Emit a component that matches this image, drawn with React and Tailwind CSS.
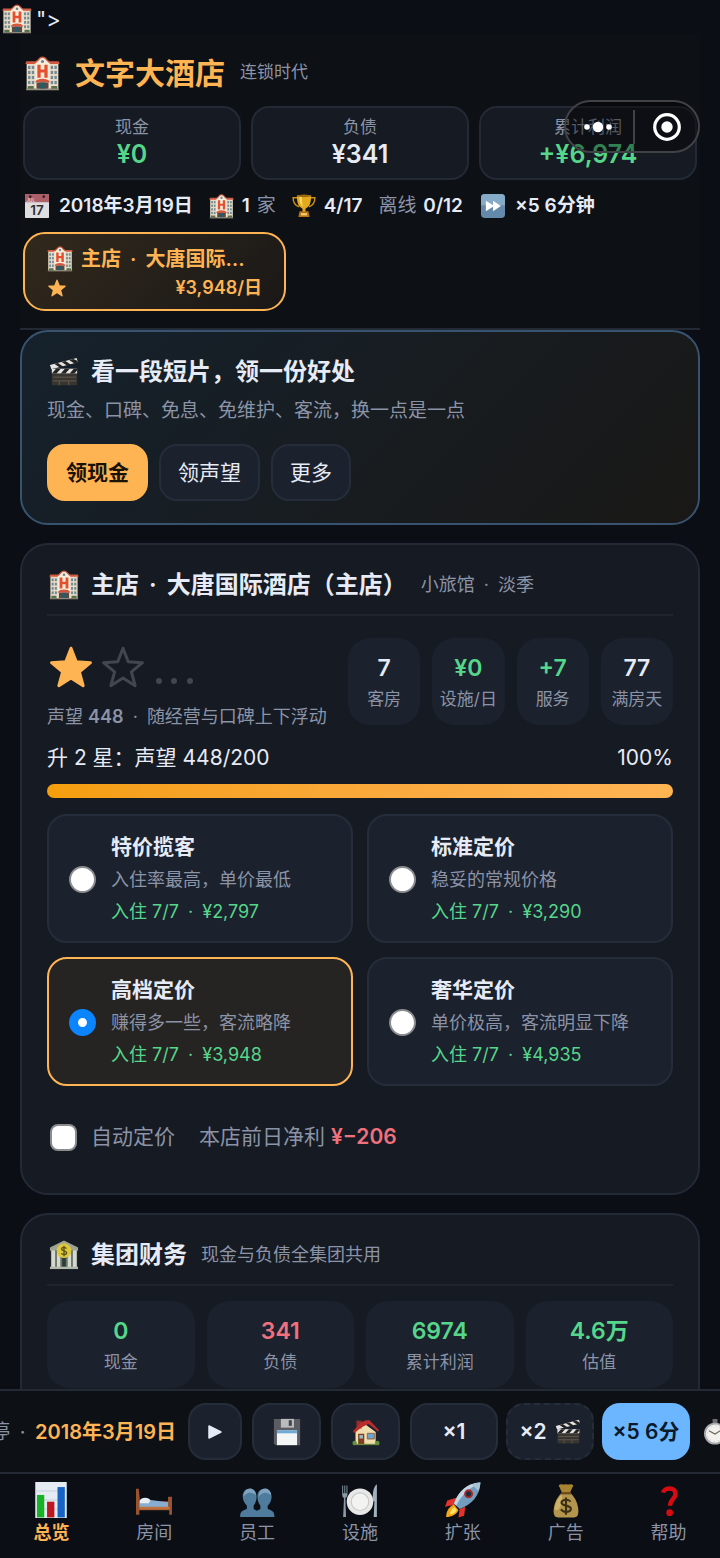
function Svg({ className, children }) {
  return (
    <svg viewBox="0 0 32 32" className={`shrink-0 ${className}`} aria-hidden="true">
      {children}
    </svg>
  );
}

const WINDOWS = [2.8, 6.2, 23.5, 26.9].flatMap((x) => [9, 13.6, 18.2, 22.8].map((y) => [x, y]));

function Hotel({ className }) {
  return (
    <Svg className={className}>
      <rect x="1.5" y="6" width="29" height="24" fill="#e9dcc6" />
      <path d="M1.200 4.800h9v2.400H.3zM21.800 4.800h9l.9 2.400h-9.900z" fill="#cf5a42" />
      <path d="M9.500 30V6C10.500 4.500 12 4.300 12.600 3a4.200 4.200 0 0 1 6.800 0C20 4.300 21.500 4.500 22.500 6v24z" fill="#f5ecdc" />
      <path d="M9.600 6.200C10.600 4.300 12.200 4.200 12.800 2.700a4 4 0 0 1 6.400 0c.6 1.500 2.200 1.600 3.200 3.500" fill="none" stroke="#cf5a42" strokeWidth="1.300" />
      <circle cx="16" cy="5" r="1.400" fill="#6f8288" />
      {WINDOWS.map(([x, y]) => (
        <rect key={`${x}-${y}`} x={x} y={y} width="2.200" height="2.900" fill="#718b96" />
      ))}
      <path d="M11.300 8h3v4.400h3.400V8h3v11.800h-3v-4.700h-3.400v4.700h-3z" fill="#e4502f" />
      <path d="M9.500 23.500c1.500-3.500 11.500-3.500 13 0v.8h-13z" fill="#d4573e" />
      <rect x="10.500" y="24.300" width="11" height="5.700" fill="#5d4a3c" />
      <rect x="13.300" y="24.300" width="5.400" height="5.700" fill="#2d5866" />
      <path d="M1 30h30v1.200H1z" fill="#9a8f80" />
      <path d="M2.500 27.500H8V30H2.500zM24 27.500h5.500V30H24z" fill="#56714c" />
    </Svg>
  );
}

function CalendarIcon({ className }) {
  return (
    <Svg className={className}>
      <rect x="0" y="0" width="32" height="32" rx="1" fill="#dedee0" />
      <path d="M0 0h32v11H0z" fill="#ad6069" />
      <circle cx="7" cy="3.500" r="1.800" fill="#33222a" />
      <circle cx="25" cy="3.500" r="1.800" fill="#33222a" />
      <text x="2" y="10" fontSize="6" fontFamily="Inter, sans-serif" fill="#e9ccd0">JUL</text>
      <text x="16" y="28" textAnchor="middle" fontSize="18" fontFamily="Inter, sans-serif" fill="#303034">17</text>
    </Svg>
  );
}

function Trophy({ className }) {
  return (
    <Svg className={className}>
      <path d="M7 5H1.500c0 7 3 10.500 8 12M25 5h5.500c0 7-3 10.500-8 12" fill="none" stroke="#c98d14" strokeWidth="2" />
      <path d="M6.500 2h19c0 10-2 15-7.500 17.500V24h-4v-4.500C8.500 17 6.500 12 6.500 2z" fill="#e3a91f" />
      <path d="M10 4h3c0 6 .5 10 2 13-3.500-2-5-6-5-13z" fill="#f8db6b" />
      <ellipse cx="16" cy="2.500" rx="9.500" ry="1.700" fill="#9b6a10" />
      <path d="M10 23h12l1.500 7.500h-15z" fill="#b97415" />
      <path d="M12 25.500h8v3h-8z" fill="#f2cf70" />
    </Svg>
  );
}

function FastForward({ className }) {
  return (
    <Svg className={className}>
      <rect x="0" y="0" width="32" height="32" rx="5" fill="#6489aa" />
      <path d="M0 5a5 5 0 0 1 5-5h22a5 5 0 0 1 5 5v10H0z" fill="#86abc8" />
      <path d="M6.500 9 16 15V9l10.500 7L16 23v-6l-9.500 6z" fill="#fff" />
    </Svg>
  );
}

function Clapper({ className }) {
  return (
    <Svg className={className}>
      <path d="M1 8.500 29.500 1l1.300 4.500L2.500 13z" fill="#e4e4e4" />
      <path d="m5.500 7.300 6 4 4-1-6-4zM13.500 5.200l6 4 4-1-6-4zM21.500 3.100l6 4 3.300-1-.6-2-4.300-2z" fill="#262423" />
      <rect x="3" y="12.500" width="27" height="17.500" rx="1" fill="#383430" />
      <path d="M3 12.500h27v5H3z" fill="#e4e4e4" />
      <path d="m7.500 12.500-4.500 5h5l4.500-5zM17 12.500l-4.500 5h5l4.500-5zM26.500 12.500l-4.500 5h5l3-3.200v-1.800z" fill="#262423" />
      <path d="M4 21.500h25M4 25.500h25" stroke="#6f655c" strokeWidth=".8" />
      <path d="M11 26v4M21 26v4" stroke="#6f655c" strokeWidth=".8" />
    </Svg>
  );
}

function Bank({ className }) {
  return (
    <Svg className={className}>
      <path d="M16 .5 31 8v3.500H1V8z" fill="#9ea594" />
      <path d="M2 11h28v18H2z" fill="#6d7766" />
      <path d="M2.500 11h4v18h-4zM8.500 14h3.500v15H8.500zM20 14h3.500v15H20zM25.500 11h4v18h-4z" fill="#d5d8cf" />
      <path d="M14 19h4v10h-4z" fill="#2c3e3b" />
      <path d="M1 28.500h30V31H1z" fill="#b3b8ac" />
      <circle cx="16" cy="11.500" r="7.800" fill="#ddc93b" />
      <path d="M18.600 9.200c-1-2-5.200-1.800-5.200.5 0 2.400 5.400 1.300 5.400 4 0 2.400-4.500 2.500-5.600.4M16 6v11.200" fill="none" stroke="#5f5519" strokeWidth="1.500" />
    </Svg>
  );
}

function Floppy({ className }) {
  return (
    <Svg className={className}>
      <path d="M1 1h30v30H3l-2-2z" fill="#5b5d63" />
      <path d="M9 1h15v10H9z" fill="#b9bbbf" />
      <path d="M18 2.500h3.500V9H18z" fill="#45474c" />
      <path d="M4.500 14h23v17h-23z" fill="#f4f5f6" />
      <path d="M4.500 14h23v3.500h-23z" fill="#6fa9d4" />
    </Svg>
  );
}

function House({ className }) {
  return (
    <Svg className={className}>
      <path d="M4 15 15 7l12 9v14H4z" fill="#f1dcae" />
      <path d="M5 3h6v9H5z" fill="#8e2f2b" />
      <path d="M1 15 10 5l6-2.500h4L31 14l-1.500 1.500L19.500 7l-2 .5L10 11l-7 6z" fill="#bb2b2c" />
      <path d="M7 18h7v12H7z" fill="#7d3f22" />
      <path d="M8.500 19.500h4v4h-4z" fill="#9fb8c4" />
      <path d="M17.500 17.500h8V24h-8z" fill="#6da3cc" stroke="#8a5a36" />
      <circle cx="3" cy="28.500" r="2.500" fill="#5d9636" />
      <circle cx="29" cy="28.500" r="2.500" fill="#5d9636" />
      <path d="M1 29.500h30V31H1z" fill="#6a8a3c" />
    </Svg>
  );
}

function Stopwatch({ className }) {
  return (
    <Svg className={className}>
      <path d="M13 0h6v5h-6z" fill="#6d6f73" />
      <path d="m25 4 3 3-2 2-3-3z" fill="#8b8d91" />
      <circle cx="16" cy="18" r="13.500" fill="#a9abae" />
      <circle cx="16" cy="18" r="11.200" fill="#f2f1ee" />
      <path d="m8.500 14.500 7.500 4 8-5" fill="none" stroke="#67615b" strokeWidth="1.300" />
      <circle cx="16" cy="18" r="9.500" fill="none" stroke="#aaa" strokeWidth="1" strokeDasharray="1 4" />
    </Svg>
  );
}

function Chart({ className }) {
  return (
    <Svg className={className}>
      <path d="M2 0h28v32H2z" fill="#e4ebf2" />
      <path d="M2 8h28M2 16h28M2 24h28" stroke="#c5d0dc" />
      <path d="M3.500 11.500h6.500v20H3.500z" fill="#18b324" />
      <path d="M12.500 17.500h6.500v14h-6.500z" fill="#bd1721" />
      <path d="M21.800 4.500h6.500v27h-6.500z" fill="#1763c4" />
    </Svg>
  );
}

function Bed({ className }) {
  return (
    <Svg className={className}>
      <path d="M0 6h2.500l1 11h25v-4H32v16h-2.500v-4H3v4H0z" fill="#97522f" />
      <path d="M3 17c1-3 8-3.500 10-1l15.500 2v4.500H3z" fill="#87aed0" />
      <path d="M3.500 16.500c1-3.200 8-3.500 9 0l-1 2.300h-8z" fill="#e7edf3" />
      <path d="M3 22h27v2.500H3z" fill="#c0713f" />
    </Svg>
  );
}

function People({ className }) {
  return (
    <Svg className={className}>
      <path d="M1 31c0-5 2-5.500 6-7v-3C1.500 16 2 6 9.500 6S17 16 13 21v3l3 1.500 3-1.500v-3c-4-5-4-15 3.500-15S31 16 25.500 21v3c4 1.500 6 2 6 7z" fill="#4f7b9d" />
      <path d="M4 13c0-9.500 11-9.500 11-1-3-3.500-8-3.500-11 1zM17.500 13c0-9.500 11-9.500 11-1-3-3.500-8-3.500-11 1z" fill="#7fa3be" />
    </Svg>
  );
}

function Plate({ className }) {
  return (
    <Svg className={className}>
      <circle cx="16" cy="17.500" r="11.800" fill="#e8e8e8" />
      <circle cx="16" cy="17.500" r="7.800" fill="#f3f3f2" stroke="#c9cacb" strokeWidth="1" />
      <path d="M.2 3v8c0 2 .8 3 1.600 3L1 31h2.600L3 14c1-.4 1.800-1.500 1.800-3V3H4v7H2.900V3h-.8v7H1V3z" fill="#8b9aa8" />
      <path d="M31 2c-3 2-4 8-3.500 15h1.300L28.200 31H31z" fill="#a3b1be" />
    </Svg>
  );
}

function Rocket({ className }) {
  return (
    <Svg className={className}>
      <path d="M10 14 2 16.500 0 22l9-2zM18 22l-1 8-5 1.500L13 24z" fill="#e3312b" />
      <path d="M8 20c-5 2-7 7-7 11 5 0 9-2 11-6z" fill="#f5a41b" />
      <path d="M8.500 22.500c-3 1.500-4 4-4 6 3 0 5-1.500 6-3.500z" fill="#ffe45c" />
      <path d="M31.500.5C20 1 12 8 8 19l5 5C24 20 31 12 31.500.5z" fill="#739dbe" />
      <path d="M31.500.5C20 1 12 8 8 19l2 2C15 11 22 5 31.500.5z" fill="#c5d6e3" />
      <path d="M31.500.5c-3 .2-5.500.8-7.500 1.800l5.700 5.700c1-2.300 1.600-4.700 1.800-7.500z" fill="#a9c3d6" />
      <circle cx="21" cy="10.500" r="4" fill="#ad292d" />
      <circle cx="21" cy="10.500" r="2.300" fill="#202a38" />
    </Svg>
  );
}

function MoneyBag({ className }) {
  return (
    <Svg className={className}>
      <path d="M9.500 3c2.500-2 3.500 0 6.500-1 3 1 4-1 6.500 1l-3 6.500h-7z" fill="#a98532" />
      <path d="M12 10h8c4 3.500 7 9.500 7 16 0 4-1.500 5.500-4 5.500H9c-2.500 0-4-1.500-4-5.500C5 19.500 8 13.500 12 10z" fill="#b3954e" />
      <path d="M12 11c-3.500 3.500-6 8.500-6 13.500 4 3 8.500-8 6-13.500z" fill="#cdb26a" />
      <path d="M11.500 9h9v2h-9z" fill="#6e491b" />
      <path d="M20 17.500c-1.500-2.700-8-2.200-8 1s8.300 1.800 8.300 5.300c0 3.400-7.100 3.700-8.700.5M16 13.800v15.400" fill="none" stroke="#3e3015" strokeWidth="1.900" />
    </Svg>
  );
}

function Question({ className }) {
  return (
    <Svg className={className}>
      <path d="M10.800 9.500C11.500 5 21.800 4 21.800 10.500c0 4.500-5 5-5 10.500" fill="none" stroke="#d90b12" strokeWidth="4" />
      <circle cx="16.600" cy="27.300" r="3" fill="#d90b12" />
    </Svg>
  );
}

const STAR =
  "M16 3.500 19.500 12.500 29 13.100 21.600 19.200 24.100 28.500 16 23.300 7.900 28.500 10.400 19.200 3 13.100 12.500 12.500z";

function Star({ className, filled = true }) {
  return (
    <Svg className={className}>
      <path
        d={STAR}
        fill={filled ? "currentColor" : "none"}
        stroke="currentColor"
        strokeWidth={2}
        strokeLinejoin="round"
      />
    </Svg>
  );
}

function Dot() {
  return <span className="mx-1">·</span>;
}

function HeaderStat({ label, value, tone }) {
  return (
    <div className="flex flex-col items-center rounded-[18px] border-2 border-[#232a36] bg-[#161a22] pt-[7px] pb-[9px]">
      <span className="text-[17px] leading-6 text-[#8b93a7]">{label}</span>
      <span className={`text-[25px] leading-[30px] font-semibold ${tone}`}>{value}</span>
    </div>
  );
}

function Tile({ label, value, tone }) {
  return (
    <div className="flex flex-col items-center rounded-[22px] bg-[#1b212d] pt-4 pb-3">
      <span className={`text-[23px] leading-7 font-semibold ${tone}`}>{value}</span>
      <span className="mt-1 text-[17px] leading-[27px] whitespace-nowrap text-[#8b93a7]">{label}</span>
    </div>
  );
}

function CardTitle({ icon: Icon, title, note, id }) {
  return (
    <div className="flex items-center border-b-2 border-[#1f242e] pb-[13px]">
      <Icon className="ml-0.5 size-[30px]" />
      <h2 id={id} className="ml-3 text-2xl leading-8 font-semibold whitespace-nowrap">
        {title}
      </h2>
      <span className="ml-3.5 text-[18px] leading-8 whitespace-nowrap text-[#8b93a7]">{note}</span>
    </div>
  );
}

const CARD = "rounded-[28px] border-2 border-[#232a36] bg-[#161a22] px-[25px]";

const prices = [
  ["特价揽客", "入住率最高，单价最低", "¥2,797"],
  ["标准定价", "稳妥的常规价格", "¥3,290"],
  ["高档定价", "赚得多一些，客流略降", "¥3,948"],
  ["奢华定价", "单价极高，客流明显下降", "¥4,935"],
];

const tabs = [
  ["总览", Chart],
  ["房间", Bed],
  ["员工", People],
  ["设施", Plate],
  ["扩张", Rocket],
  ["广告", MoneyBag],
  ["帮助", Question],
];

const CONTROL =
  "flex h-[57px] shrink-0 items-center justify-center rounded-[18px] border-2 border-[#262d3a] bg-[#1b212d] text-[21px] font-semibold whitespace-nowrap";

function PromoCard() {
  return (
    <section
      aria-labelledby="promo"
      className="rounded-[28px] border-2 border-[#38536f] bg-linear-135 from-[#15212c] to-[#191816] px-[25px] pt-6 pb-[22px]"
    >
      <div className="flex items-center">
        <Clapper className="ml-0.5 size-[30px]" />
        <h2 id="promo" className="ml-3 text-2xl leading-8 font-semibold">
          看一段短片，领一份好处
        </h2>
      </div>
      <p className="mt-2 text-[19px] leading-[30px] text-[#8b93a7]">
        现金、口碑、免息、免维护、客流，换一点是一点
      </p>
      <div className="mt-[18px] flex gap-[11px] text-[21px]">
        <button className="h-[57px] rounded-[18px] border-2 border-[#ffb454] bg-[#ffb454] px-[17px] font-semibold text-[#1a1206]">
          领现金
        </button>
        <button className="h-[57px] rounded-[18px] border-2 border-[#262d3a] bg-[#1b212d] px-[17px]">领声望</button>
        <button className="h-[57px] rounded-[18px] border-2 border-[#262d3a] bg-[#1b212d] px-[17px]">更多</button>
      </div>
    </section>
  );
}

function StoreCard() {
  return (
    <section aria-labelledby="store" className={`${CARD} pt-6 pb-10`}>
      <CardTitle
        id="store"
        icon={Hotel}
        title={
          <>
            主店 <Dot /> 大唐国际酒店（主店）
          </>
        }
        note={
          <>
            小旅馆 <Dot /> 淡季
          </>
        }
      />
      <div className="mt-[22px] flex items-start justify-between">
        <div className="min-w-0">
          <div className="flex h-[58px] items-center">
            <Star className="size-12 text-[#ffb454]" />
            <Star filled={false} className="ml-1 size-12 text-[#414651]" />
            <svg viewBox="0 0 40 48" className="ml-2 h-12 w-10 text-[#414651]" aria-hidden="true">
              <g fill="currentColor">
                <circle cx="4" cy="38" r="3" />
                <circle cx="19" cy="38" r="3" />
                <circle cx="35" cy="38" r="3" />
              </g>
            </svg>
          </div>
          <p className="mt-[7px] text-[18px] leading-7 whitespace-nowrap text-[#8b93a7]">
            声望 <b className="font-semibold">448</b> <Dot /> 随经营与口碑上下浮动
          </p>
        </div>
        <div className="grid w-[325px] shrink-0 grid-cols-4 gap-3">
          <Tile value="7" label="客房" tone="text-[#e6ebf5]" />
          <Tile value="¥0" label="设施/日" tone="text-[#56d68a]" />
          <Tile value="+7" label="服务" tone="text-[#56d68a]" />
          <Tile value="77" label="满房天" tone="text-[#e6ebf5]" />
        </div>
      </div>
      <div className="mt-[11px] flex justify-between text-[21px] leading-8">
        <span>升 2 星：声望 448/200</span>
        <span>100%</span>
      </div>
      <div className="mt-2.5 h-3.5 rounded-full bg-linear-to-r from-[#f59e0b] to-[#ffb454]" />
      <div role="radiogroup" aria-label="定价" className="mt-4 grid grid-cols-2 gap-3.5">
        {prices.map(([name, desc, amount]) => (
          <label
            key={name}
            className="flex items-center rounded-[20px] border-2 border-[#262d3a] bg-[#1b212d] pt-[15px] pb-3.5 pl-5 has-checked:border-[#ffb454] has-checked:bg-[#252423]"
          >
            <input
              type="radio"
              name="price"
              defaultChecked={name === "高档定价"}
              className="size-[27px] shrink-0 appearance-none rounded-full border-2 border-[#8b8c90] bg-white checked:border-[9px] checked:border-[#0a84ff]"
            />
            <span className="ml-[15px] flex flex-col whitespace-nowrap">
              <span className="text-[21px] leading-8 font-semibold">{name}</span>
              <span className="text-[18px] leading-[33px] text-[#8b93a7]">{desc}</span>
              <span className="text-[18px] leading-[31px] text-[#56d68a]">
                入住 7/7 <Dot /> {amount}
              </span>
            </span>
          </label>
        ))}
      </div>
      <div className="mt-[35px] flex items-center text-[21px] leading-8 text-[#8b93a7]">
        <label className="flex items-center">
          <input
            type="checkbox"
            className="ml-[3px] size-[27px] appearance-none rounded-lg border-2 border-[#8b8c90] bg-white checked:bg-[#0a84ff]"
          />
          <span className="ml-3.5">自动定价</span>
        </label>
        <span className="ml-6">
          本店前日净利 <b className="font-semibold text-[#f0707e]">¥−206</b>
        </span>
      </div>
    </section>
  );
}

export default function App() {
  return (
    <div className="flex h-screen flex-col overflow-hidden bg-[#0b0e15] font-[Inter,'Noto_Sans_CJK_SC',sans-serif] text-[#e6ebf5]">
      <main className="min-h-0 flex-1 overflow-y-auto [scrollbar-width:none]">
        <div className="flex items-center gap-1 pt-1 pl-0.5 text-[22px] leading-[30px]">
          <Hotel className="size-[30px]" />
          {'">'}
        </div>
        <div className="px-5">
          <header className="relative border-b-2 border-[#232a36] bg-[#0d1015] px-[3px] pt-[18px] pb-[17px]">
            <div className="flex items-center">
              <Hotel className="ml-0.5 size-[35px]" />
              <h1 className="ml-[15px] text-[30px] leading-[42px] font-semibold text-[#ffb454]">文字大酒店</h1>
              <span className="ml-[15px] text-[17px] text-[#8b93a7]">连锁时代</span>
            </div>
            <div className="mt-3 grid grid-cols-3 gap-2.5">
              <HeaderStat label="现金" value="¥0" tone="text-[#56d68a]" />
              <HeaderStat label="负债" value="¥341" tone="text-[#e6ebf5]" />
              <HeaderStat label="累计利润" value="+¥6,974" tone="text-[#56d68a]" />
            </div>
            <div className="absolute top-[66px] right-0 flex h-[53px] w-[136px] items-center rounded-full border-2 border-[#414246] bg-black/40">
              <button aria-label="菜单" className="flex flex-1 justify-center pr-1">
                <svg viewBox="0 0 30 12" className="h-3 w-[30px] fill-white" aria-hidden="true">
                  <circle cx="4" cy="6" r="2.800" />
                  <circle cx="15" cy="6" r="5.200" />
                  <circle cx="26" cy="6" r="2.800" />
                </svg>
              </button>
              <span className="h-[34px] w-0.5 bg-[#414246]" />
              <button aria-label="关闭" className="flex flex-1 justify-center">
                <svg viewBox="0 0 28 28" className="size-7" aria-hidden="true">
                  <circle cx="14" cy="14" r="12.300" fill="none" stroke="#fff" strokeWidth="3.200" />
                  <circle cx="14" cy="14" r="5.700" fill="#fff" />
                </svg>
              </button>
            </div>
            <div className="mt-2.5 flex items-center pl-0.5 text-[19px] leading-8 font-semibold whitespace-nowrap">
              <CalendarIcon className="size-6" />
              <span className="ml-2.5">2018年3月19日</span>
              <Hotel className="ml-4 size-[25px]" />
              <span className="ml-2">
                1 <span className="ml-0.5 font-normal text-[#8b93a7]">家</span>
              </span>
              <Trophy className="ml-4 size-6" />
              <span className="ml-2">4/17</span>
              <span className="ml-4">
                <span className="mr-0.5 font-normal text-[#8b93a7]">离线</span> 0/12
              </span>
              <FastForward className="ml-[18px] size-6" />
              <span className="ml-2.5">×5 6分钟</span>
            </div>
            <button className="mt-2.5 flex w-[263px] flex-col rounded-[22px] border-2 border-[#ffb454] bg-linear-135 from-[#32291c] to-[#1a1817] px-[22px] pt-2.5 pb-2 font-semibold text-[#ffb454]">
              <span className="flex items-center text-xl leading-[30px] whitespace-nowrap">
                <Hotel className="size-[26px]" />
                <span className="ml-2">
                  主店 <Dot /> 大唐国际…
                </span>
              </span>
              <span className="flex w-full items-center justify-between text-[18px] leading-[27px]">
                <Star className="size-5" />
                ¥3,948/日
              </span>
            </button>
          </header>
          <div className="flex flex-col gap-[18px]">
            <PromoCard />
            <StoreCard />
            <section aria-labelledby="finance" className={`${CARD} pt-6 pb-8`}>
              <CardTitle id="finance" icon={Bank} title="集团财务" note="现金与负债全集团共用" />
              <div className="mt-[15px] grid grid-cols-4 gap-3">
                <Tile value="0" label="现金" tone="text-[#56d68a]" />
                <Tile value="341" label="负债" tone="text-[#f0707e]" />
                <Tile value="6974" label="累计利润" tone="text-[#56d68a]" />
                <Tile value="4.6万" label="估值" tone="text-[#56d68a]" />
              </div>
            </section>
          </div>
        </div>
      </main>
      <div className="flex justify-end overflow-hidden border-t-2 border-[#232a36] bg-[#0d1015] py-3">
        <div className="-mr-5 flex shrink-0 items-center gap-2.5">
          <span className="mr-0.5 text-xl whitespace-nowrap text-[#8b93a7]">
            已暂停 <Dot /> <b className="font-semibold text-[#ffb454]">2018年3月19日</b>
          </span>
          <button aria-label="继续" className={`${CONTROL} w-[54px]`}>
            <svg viewBox="0 0 16 16" className="size-4 fill-current stroke-current" aria-hidden="true">
              <path d="M2 2v12l12-6z" strokeWidth="1.500" strokeLinejoin="round" />
            </svg>
          </button>
          <button aria-label="保存" className={`${CONTROL} w-[69px]`}>
            <Floppy className="size-7" />
          </button>
          <button aria-label="主页" className={`${CONTROL} w-[69px]`}>
            <House className="size-7" />
          </button>
          <div className="flex items-center gap-2">
            <button className={`${CONTROL} w-[88px]`}>×1</button>
            <button className={`${CONTROL} w-[88px] gap-2 border-dashed`}>
              ×2 <Clapper className="size-[26px]" />
            </button>
            <button className="flex h-[57px] w-[88px] shrink-0 items-center justify-center rounded-[18px] bg-[#6cb6ff] text-[21px] font-semibold whitespace-nowrap text-[#0b1a2b]">
              ×5 6分
            </button>
            <button aria-label="计时" className="w-[42px] pl-1">
              <Stopwatch className="size-[26px]" />
            </button>
          </div>
        </div>
      </div>
      <nav className="grid grid-cols-7 border-t-2 border-[#232a36] bg-[#0b0e14] pt-2 pb-2.5">
        {tabs.map(([name, Icon], i) => (
          <a
            key={name}
            href={`#${name}`}
            aria-current={i === 0 ? "page" : undefined}
            className="flex flex-col items-center text-[18px] leading-[30px] text-[#8b93a7] aria-[current=page]:font-semibold aria-[current=page]:text-[#ffb454]"
          >
            <Icon className="size-9" />
            {name}
          </a>
        ))}
      </nav>
    </div>
  );
}
